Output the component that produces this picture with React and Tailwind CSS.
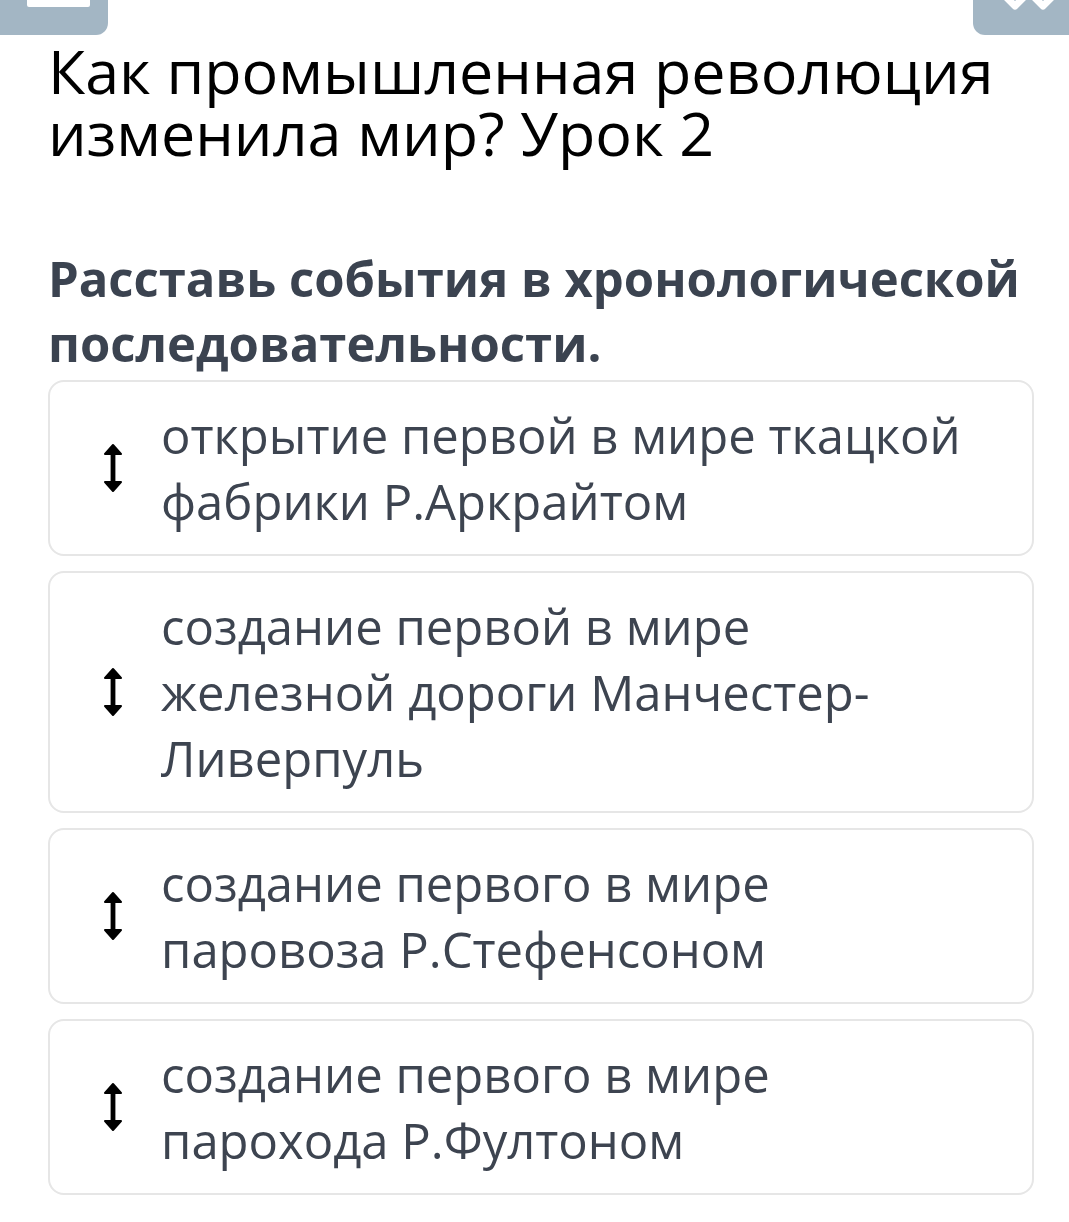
const ITEMS = [
  ['открытие первой в мире ткацкой', 'фабрики Р.Аркрайтом'],
  ['создание первой в мире', 'железной дороги Манчестер-', 'Ливерпуль'],
  ['создание первого в мире', 'паровоза Р.Стефенсоном'],
  ['создание первого в мире', 'парохода Р.Фултоном'],
];

const DragIcon = () => (
  <svg width="20" height="50" viewBox="0 0 20 50" className="shrink-0">
    <path d="M10 2 L18 11 L2 11 Z" fill="#000" stroke="#000" strokeWidth="2" strokeLinejoin="round" />
    <rect x="7.6" y="10" width="4.8" height="30" fill="#000" />
    <path d="M10 48 L18 39 L2 39 Z" fill="#000" stroke="#000" strokeWidth="2" strokeLinejoin="round" />
  </svg>
);

export default function App() {
  return (
    <div className="relative min-h-[1222px] w-[1069px] bg-white overflow-hidden" style={{ fontFamily: '"Open Sans", "Noto Sans", sans-serif' }}>
      {/* cropped toolbar buttons */}
      <div className="absolute left-0 top-0 w-[108px] h-[35px] bg-[#a3b6c4] rounded-br-[12px]">
        <div className="absolute left-[27px] top-0 w-[63px] h-[7px] bg-white rounded-b-[2px]" />
      </div>
      <div className="absolute right-0 top-0 w-[96px] h-[35px] bg-[#a3b6c4] rounded-bl-[12px]">
        <svg className="absolute left-[28px] top-[-8px]" width="60" height="18" viewBox="0 0 60 18">
          <path d="M2 2 L14 14 L26 2 M30 2 L42 14 L54 2" stroke="#fff" strokeWidth="7" fill="none" strokeLinejoin="round" />
        </svg>
      </div>

      <div className="pl-[48px] pr-[35px] pt-[40px] pb-[28px]">
        <h1 className="text-[61px] leading-[62px] text-black font-normal whitespace-nowrap">
          Как промышленная революция<br />изменила мир? Урок 2
        </h1>

        <p className="mt-[82px] text-[49px] leading-[65px] font-bold text-[#3b4350] whitespace-nowrap">
          Расставь события в хронологической<br />последовательности.
        </p>

        <div className="mt-[4px] flex flex-col gap-[15px]">
          {ITEMS.map((lines, i) => (
            <div key={i} className="flex items-center border-2 border-[#e6e6e6] rounded-[16px] pl-[53px] pr-[20px] py-[20px]">
              <DragIcon />
              <div className="ml-[38px] text-[49px] leading-[66px] text-[#3d4450] whitespace-nowrap">
                {lines.map((l, j) => <div key={j}>{l}</div>)}
              </div>
            </div>
          ))}
        </div>
      </div>
    </div>
  );
}
